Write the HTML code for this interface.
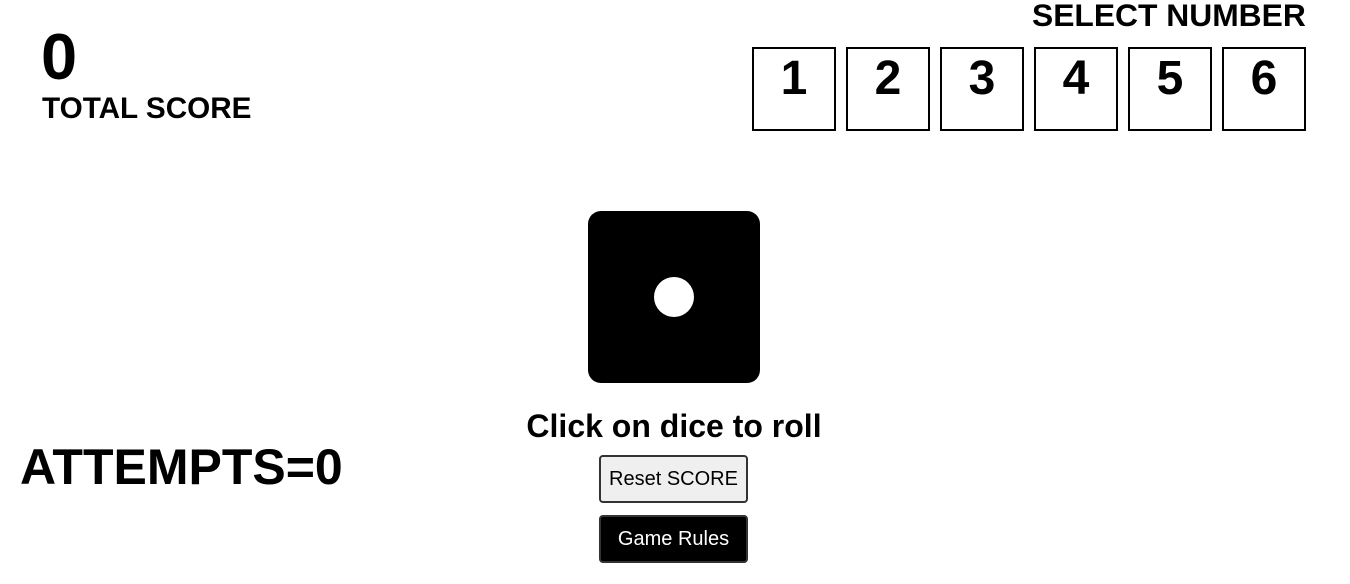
<!DOCTYPE html>
<html><head><style>
body{margin:0;width:1350px;height:584px;background:#fff;font-family:"Liberation Sans",Arial,sans-serif;position:relative;overflow:hidden;color:#000}
.a{position:absolute;white-space:nowrap;font-weight:bold;line-height:1}
.box{position:absolute;top:47px;width:80px;height:80px;border:2px solid #000;box-sizing:content-box;font-weight:bold;font-size:48px;line-height:1;text-align:center}
.box span{position:absolute;left:0;right:0;top:6px}
.btn{position:absolute;left:599px;width:149px;height:48px;box-sizing:border-box;border-radius:4px;font-size:20px;display:flex;align-items:center;justify-content:center}
</style></head><body>
<div class="a" style="left:41px;top:24px;font-size:65px">0</div>
<div class="a" style="left:42px;top:94px;font-size:29.7px">TOTAL SCORE</div>
<div class="a" style="left:1032px;top:0px;font-size:31.8px">SELECT NUMBER</div>
<div class="box" style="left:752px"><span>1</span></div>
<div class="box" style="left:846px"><span>2</span></div>
<div class="box" style="left:940px"><span>3</span></div>
<div class="box" style="left:1034px"><span>4</span></div>
<div class="box" style="left:1128px"><span>5</span></div>
<div class="box" style="left:1222px"><span>6</span></div>
<div style="position:absolute;left:588px;top:211px;width:172px;height:172px;background:#000;border-radius:13px"></div>
<div style="position:absolute;left:654px;top:277px;width:40px;height:40px;background:#fff;border-radius:50%"></div>
<div class="a" style="left:0;width:1348px;text-align:center;top:410px;font-size:32px">Click on dice to roll</div>
<div class="a" style="left:20px;top:442px;font-size:50px">ATTEMPTS=0</div>
<div class="btn" style="top:455px;background:#efefef;border:2px solid #333">Reset SCORE</div>
<div class="btn" style="top:515px;background:#000;color:#fff;border:2px solid #333">Game Rules</div>
</body></html>
